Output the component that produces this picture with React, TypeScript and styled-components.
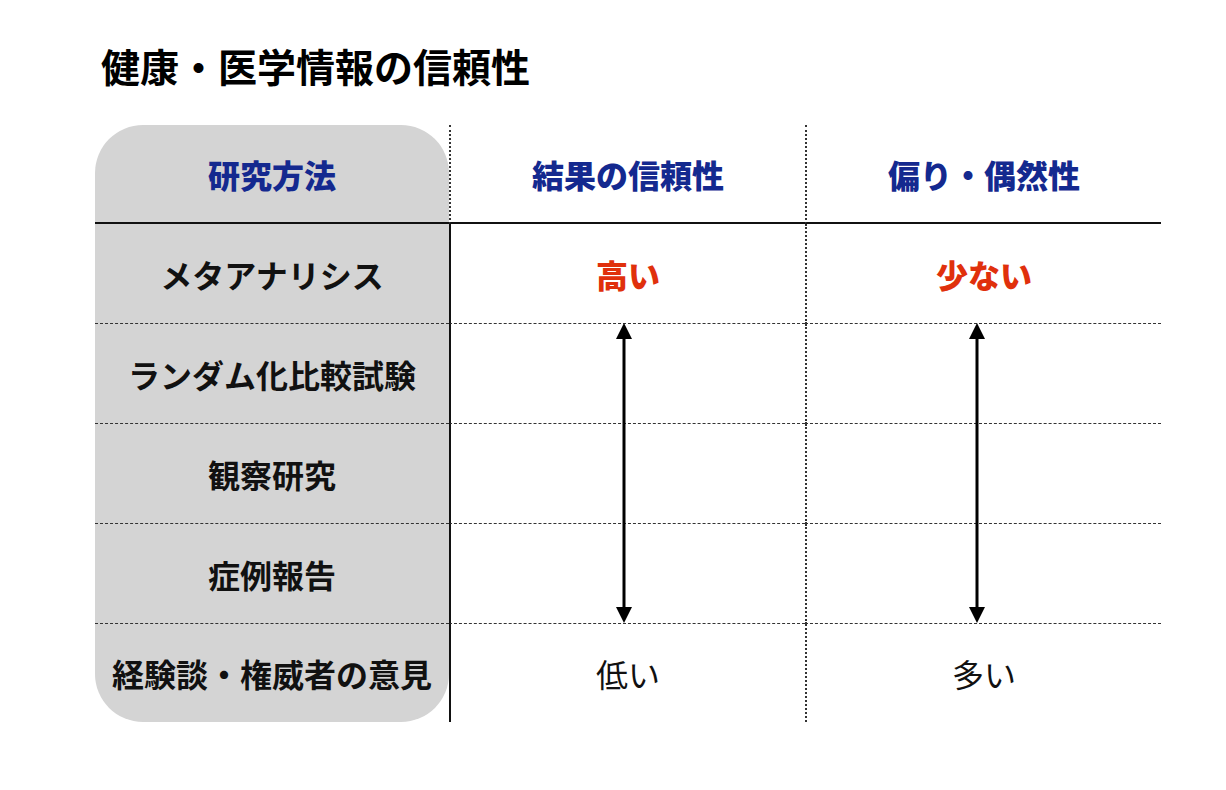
import React from 'react';
import styled, {createGlobalStyle} from 'styled-components';

const GlobalStyle = createGlobalStyle`
    html, body {
        margin: 0;
        padding: 0;
        background: #ffffff;
    }
    body {
        font-family: "Noto Sans CJK JP", "Noto Sans", sans-serif;
        color: #111111;
    }
`;

const Page = styled.div`
    width: 1226px;
    height: 790px;
    box-sizing: border-box;
    padding: 46px 0 0 95px;
`;

const Heading = styled.h1`
    margin: 0 0 41px 6px;
    font-size: 39px;
    line-height: 38px;
    font-weight: 700;
    color: #000000;
`;

const Table = styled.div`
    display: flex;
    flex-direction: row;
    align-items: flex-start;
    width: 1066px;
`;

const Column = styled.div<{$shaded?: boolean}>`
    width: ${p => (p.$shaded ? '354px' : '356px')};
    display: flex;
    flex-direction: column;
    background: ${p => (p.$shaded ? '#d4d4d4' : 'transparent')};
    border-radius: ${p => (p.$shaded ? '48px' : '0')};
    overflow: hidden;
`;

const HeadCell = styled.div<{$edge?: 'dotted' | 'none'}>`
    height: 97px;
    display: flex;
    align-items: center;
    justify-content: center;
    border-bottom: 2px solid #111111;
    border-left: ${p => (p.$edge === 'dotted' ? '2px dotted #333333' : 'none')};
    font-size: 32px;
    font-weight: 900;
    color: #14298f;
`;

const Cell = styled.div<{$edge?: 'solid' | 'dotted' | 'none'; $last?: boolean; $tone?: 'label' | 'high' | 'low'}>`
    height: ${p => (p.$last ? '98px' : '99px')};
    display: flex;
    align-items: center;
    justify-content: center;
    border-bottom: ${p => (p.$last ? 'none' : '1px dashed #333333')};
    border-left: ${p =>
        p.$edge === 'solid' ? '2px solid #111111' : p.$edge === 'dotted' ? '2px dotted #333333' : 'none'};
    font-size: 32px;
    font-weight: ${p => (p.$tone === 'low' ? 400 : p.$tone === 'high' ? 900 : 700)};
    color: ${p => (p.$tone === 'high' ? '#e0300c' : '#111111')};
    white-space: nowrap;
`;

const Span = styled.div`
    position: relative;
    display: flex;
    flex-direction: column;
`;

const ArrowWrap = styled.div<{$shift: number}>`
    position: absolute;
    top: -1px;
    left: calc(50% - 8px + ${p => p.$shift}px);
    width: 16px;
    height: 300px;
    pointer-events: none;
`;

const Arrow = ({shift}: {shift: number}) => (
    <ArrowWrap $shift={shift}>
        <svg width="16" height="300" viewBox="0 0 16 300">
            <line x1="8" y1="12" x2="8" y2="288" stroke="#000" strokeWidth="3" />
            <polygon points="8,0 0,16 16,16" fill="#000" />
            <polygon points="8,300 0,284 16,284" fill="#000" />
        </svg>
    </ArrowWrap>
);

const methods = ['ランダム化比較試験', '観察研究', '症例報告'];

export default function App() {
    return (
        <Page>
            <GlobalStyle />
            <Heading>健康・医学情報の信頼性</Heading>
            <Table>
                <Column $shaded>
                    <HeadCell>研究方法</HeadCell>
                    <Cell $tone="label">メタアナリシス</Cell>
                    {methods.map(m => (
                        <Cell key={m} $tone="label">{m}</Cell>
                    ))}
                    <Cell $tone="label" $last>経験談・権威者の意見</Cell>
                </Column>
                <Column>
                    <HeadCell $edge="dotted">結果の信頼性</HeadCell>
                    <Cell $edge="solid" $tone="high">高い</Cell>
                    <Span>
                        {methods.map(m => (
                            <Cell key={m} $edge="solid" />
                        ))}
                        <Arrow shift={-3} />
                    </Span>
                    <Cell $edge="solid" $tone="low" $last>低い</Cell>
                </Column>
                <Column>
                    <HeadCell $edge="dotted">偏り・偶然性</HeadCell>
                    <Cell $edge="dotted" $tone="high">少ない</Cell>
                    <Span>
                        {methods.map(m => (
                            <Cell key={m} $edge="dotted" />
                        ))}
                        <Arrow shift={-6} />
                    </Span>
                    <Cell $edge="dotted" $tone="low" $last>多い</Cell>
                </Column>
            </Table>
        </Page>
    );
}
